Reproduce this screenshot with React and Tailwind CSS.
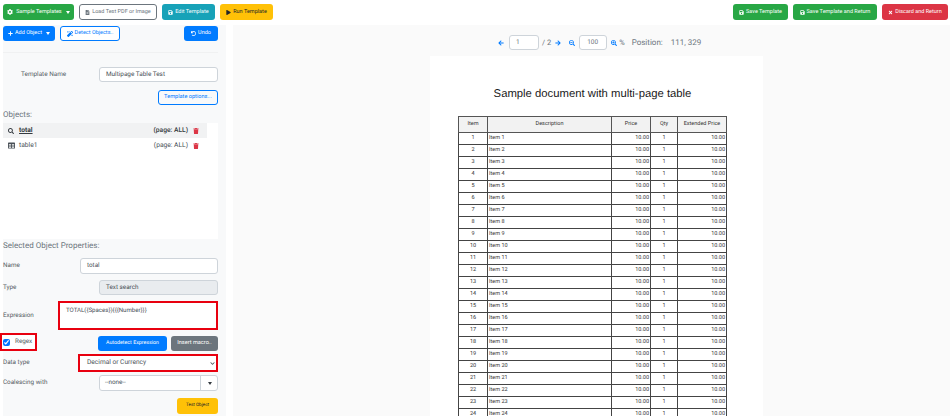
import { FaCog, FaFileAlt, FaSave, FaPlay, FaTimes, FaPlus, FaMagic, FaUndo, FaSearch, FaTable, FaTrash, FaArrowLeft, FaArrowRight, FaSearchMinus, FaSearchPlus, FaChevronDown } from "react-icons/fa";

const Caret = () => (
  <span className="ml-[2px] inline-block border-x-[2.5px] border-t-[3px] border-x-transparent border-t-current" />
);

const Btn = ({ className, children }) => (
  <div className={`flex items-center justify-center gap-[2px] rounded-[3px] whitespace-nowrap ${className}`}>
    {children}
  </div>
);

const FieldRow = ({ label, className, children }) => (
  <div className={`flex items-center justify-between text-[6.3px] text-[#555c63] ${className}`}>
    <span>{label}</span>
    {children}
  </div>
);

const rows = Array.from({ length: 24 }, (_, i) => i + 1);

const App = () => {
  return (
    <div className="h-[416px] w-[950px] overflow-hidden bg-white text-[#495057] [text-rendering:geometricPrecision] font-['Roboto','Noto_Sans',sans-serif]">
      {/* top toolbar */}
      <div className="flex h-[25px] items-start justify-between pl-[3px] pr-[2px] pt-1 text-[5.5px]">
        <div className="flex gap-[5px]">
          <Btn className="h-[16px] w-[71px] bg-[#28a745] text-white">
            <FaCog size={6} className="mr-[1px]" />
            Sample Templates
            <Caret />
          </Btn>
          <Btn className="h-[16px] w-[78px] border border-[#6c757d] bg-white text-[#6c757d]">
            <FaFileAlt size={5} />
            Load Test PDF or Image
          </Btn>
          <Btn className="h-[16px] w-[53px] bg-[#17a2b8] text-white">
            <FaSave size={5} />
            Edit Template
          </Btn>
          <Btn className="h-[16px] w-[53px] bg-[#ffc107] text-[#212529]">
            <FaPlay size={5} />
            Run Template
          </Btn>
        </div>
        <div className="flex gap-[5px]">
          <Btn className="h-[16px] w-[55px] bg-[#28a745] text-white">
            <FaSave size={5} />
            Save Template
          </Btn>
          <Btn className="h-[16px] w-[84px] bg-[#28a745] text-white">
            <FaSave size={5} />
            Save Template and Return
          </Btn>
          <Btn className="h-[16px] w-[66px] bg-[#dc3545] text-white">
            <FaTimes size={5} />
            Discard and Return
          </Btn>
        </div>
      </div>

      <div className="flex h-[391px] pl-[3px]">
        {/* left panel */}
        <div className="h-full w-[223px] shrink-0 bg-[#f8f9fa] pr-[8px]">
          <div className="flex h-[28px] justify-between border-b border-[#f0f1f2] pt-[1px] text-[5.5px]">
            <div className="flex gap-[5px]">
              <Btn className="h-[15px] w-[52px] bg-[#007bff] text-white">
                <FaPlus size={5} />
                Add Object
                <Caret />
              </Btn>
              <Btn className="h-[15px] w-[60px] border border-[#007bff] bg-white text-[#007bff]">
                <FaMagic size={6} />
                Detect Objects..
              </Btn>
            </div>
            <Btn className="h-[15px] w-[34px] bg-[#007bff] text-white">
              <FaUndo size={5} />
              Undo
            </Btn>
          </div>

          <div className="mt-[14px] flex items-center justify-between pl-[18px]">
            <span className="text-[6.4px] text-[#555c63]">Template Name</span>
            <div className="flex h-[15px] w-[119px] items-center rounded-[3px] border border-[#ced4da] bg-white pl-[6px] text-[6.4px]">
              Multipage Table Test
            </div>
          </div>
          <div className="mt-[8px] flex justify-end">
            <Btn className="h-[15px] w-[60px] border border-[#007bff] text-[5.6px] text-[#007bff]">Template options...</Btn>
          </div>
          <div className="mt-[3px] text-[8px] leading-[13px] text-[#6c757d]">Objects:</div>

          <div className="mt-[2px] h-[116px] bg-white">
            <div className="flex h-[15px] w-[204px] items-center bg-[#f1f2f3] pr-[8px] text-[6.7px] text-[#343a40]">
              <FaSearch size={6} className="ml-[5px] mr-[5px]" />
              <span className="font-bold underline">total</span>
              <span className="ml-auto font-medium">(page: ALL)</span>
              <FaTrash size={6} className="ml-[5px] text-[#dc3545]" />
            </div>
            <div className="flex h-[15px] w-[204px] items-center pr-[8px] text-[6.7px] text-[#495057]">
              <FaTable size={7} className="ml-[5px] mr-[4px]" />
              <span>table1</span>
              <span className="ml-auto">(page: ALL)</span>
              <FaTrash size={6} className="ml-[5px] text-[#dc3545]" />
            </div>
          </div>

          <div className="text-[8px] leading-[13px] text-[#6c757d]">Selected Object Properties:</div>

          <FieldRow label="Name" className="mt-[6px]">
            <div className="flex h-[16px] w-[138px] items-center rounded-[3px] border border-[#ced4da] bg-white pl-[6px] text-[#495057]">
              total
            </div>
          </FieldRow>
          <FieldRow label="Type" className="mt-[6px]">
            <div className="flex h-[15px] w-[119px] items-center rounded-[3px] border border-[#ced4da] bg-[#e9ecef] pl-[6px] text-[#495057]">
              Text search
            </div>
          </FieldRow>
          <FieldRow label="Expression" className="mt-[6px]">
            <div className="h-[29px] w-[160px] border-2 border-[#e8000f] bg-white pl-[6px] pt-[3px] text-[6.1px] text-[#495057]">
              {"TOTAL({Spaces}){{{Number}}}"}
            </div>
          </FieldRow>

          <div className="mt-[3px] flex items-end justify-between">
            <div className="-ml-[3px] flex h-[18px] w-[37px] shrink-0 items-center gap-[5px] border-2 border-[#e8000f] bg-white text-[6.3px] text-[#555c63]">
              <input type="checkbox" checked readOnly className="m-0 ml-px h-[7px] w-[7px] accent-[#0075ff]" />
              Regex
            </div>
            <div className="flex gap-[4px]">
              <Btn className="h-[15px] w-[69px] bg-[#007bff] text-[5.3px] text-white">Autodetect Expression</Btn>
              <Btn className="h-[15px] w-[47px] bg-[#6c757d] text-[5.6px] text-white">Insert macro..</Btn>
            </div>
          </div>

          <FieldRow label="Data type" className="mt-[3px]">
            <div className="flex h-[18px] w-[140px] items-center justify-between border-2 border-[#e8000f] bg-white pl-[7px] pr-[1px] text-[6.6px] text-[#495057]">
              Decimal or Currency
              <FaChevronDown size={5} />
            </div>
          </FieldRow>
          <FieldRow label="Coalescing with" className="mt-[3px]">
            <div className="flex h-[16px] w-[119px] items-center rounded-[3px] border border-[#ced4da] bg-white text-[#495057]">
              <span className="flex-1 pl-[5px]">--none--</span>
              <span className="flex h-full w-[17px] items-center justify-center border-l border-[#ced4da] text-[#343a40]">
                <Caret />
              </span>
            </div>
          </FieldRow>
          <div className="mt-[7px] flex justify-end">
            <Btn className="h-[16px] w-[41px] bg-[#ffc107] text-[4.6px] text-[#212529]">Test Object</Btn>
          </div>
        </div>

        {/* document viewer */}
        <div className="ml-[7px] h-full flex-1 bg-[#fafafa]">
          <div className="flex h-[31px] items-center pl-[265px] pt-[4px] text-[8px] text-[#6c757d]">
            <FaArrowLeft size={6} className="text-[#007bff]" />
            <div className="ml-[5px] flex h-[15px] w-[30px] items-center rounded-[3px] border border-[#ced4da] bg-white pl-[6px] text-[6.5px]">1</div>
            <span className="ml-[3px] text-[7.5px]">/ 2</span>
            <FaArrowRight size={6} className="ml-[4px] text-[#007bff]" />
            <FaSearchMinus size={6} className="ml-[8px] text-[#007bff]" />
            <div className="ml-[4px] flex h-[15px] w-[28px] items-center rounded-[3px] border border-[#ced4da] bg-white pl-[7px] text-[6.5px]">100</div>
            <FaSearchPlus size={6} className="ml-[4px] text-[#007bff]" />
            <span className="ml-[2px] text-[7.5px]">%</span>
            <span className="ml-[7px]">Position:</span>
            <span className="ml-[8px]">111, 329</span>
          </div>

          <div className="ml-[197px] h-[360px] w-[333px] overflow-hidden bg-white pt-[31px] font-['Liberation_Sans',sans-serif]">
            <div className="pr-[8px] text-center text-[11.3px] leading-[14px] text-[#1a1a1a]">Sample document with multi-page table</div>
            <table className="ml-[28px] mt-[15px] w-[268px] table-fixed border-collapse text-[5.5px] text-[#333] font-['Roboto',sans-serif]">
              <colgroup>
                <col className="w-[29px]" />
                <col className="w-[124px]" />
                <col className="w-[39px]" />
                <col className="w-[27px]" />
                <col className="w-[49px]" />
              </colgroup>
              <thead>
                <tr className="h-[16px] bg-[#f2f2f2]">
                  <th className="border border-[#555] font-normal">Item</th>
                  <th className="border border-[#555] font-normal">Description</th>
                  <th className="border border-[#555] font-normal">Price</th>
                  <th className="border border-[#555] font-normal">Qty</th>
                  <th className="border border-[#555] font-normal">Extended Price</th>
                </tr>
              </thead>
              <tbody>
                {rows.map((n) => (
                  <tr key={n} className="h-[12px]">
                    <td className="border border-[#444] p-0 text-center leading-[11px]">{n}</td>
                    <td className="border border-[#444] p-0 pl-px leading-[11px]">Item {n}</td>
                    <td className="border border-[#444] p-0 pr-px text-right leading-[11px]">10.00</td>
                    <td className="border border-[#444] p-0 text-center leading-[11px]">1</td>
                    <td className="border border-[#444] p-0 pr-px text-right leading-[11px]">10.00</td>
                  </tr>
                ))}
              </tbody>
            </table>
          </div>
        </div>
      </div>
    </div>
  );
};

export default App;
